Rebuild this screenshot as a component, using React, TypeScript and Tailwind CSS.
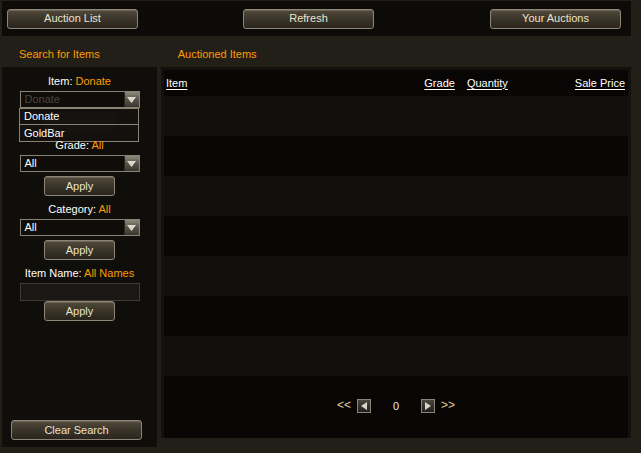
import React from 'react';

const font = { fontFamily: '"Liberation Sans", Arial, sans-serif' };

type BtnProps = { title: string, className?: string };

const GameButton = ({ title, className = '' }: BtnProps) => (
    <div className={`flex items-center justify-center h-[20px] rounded-[3px] border border-[#8c8578] bg-gradient-to-b from-[#524a3b] via-[#3a3429] to-[#2a251d] text-[11px] text-[#ebe3cc] shadow-[inset_0_1px_0_#6d6554] ${className}`}>
        {title}
    </div>
);

const SelectBox = ({ value, dim }: { value: string, dim?: boolean }) => (
    <div className="relative mx-auto flex h-[17px] w-[120px] items-center border border-[#8a8272] bg-[#0e0d0a]">
        <span className={`pl-[4px] text-[11px] leading-none ${dim ? 'text-[#4a463e]' : 'text-white'}`}>{value}</span>
        <div className="absolute right-0 top-0 flex h-[15px] w-[15px] items-center justify-center border-l border-[#2a2620] bg-gradient-to-b from-[#8f8a7e] via-[#5a554b] to-[#3a362f]">
            <svg width="9" height="6" viewBox="0 0 9 6"><path d="M0 0h9L4.5 6z" fill="#dcd8d0" /></svg>
        </div>
    </div>
);

const Label = ({ name, value }: { name: string, value: string }) => (
    <div className="text-center text-[11px] leading-[14px] text-white">
        {name}: <span className="text-[#ff9c00]">{value}</span>
    </div>
);

const rows = [0, 1, 2, 3, 4, 5, 6];

export default function App() {
    return (
        <div style={font} className="h-[453px] w-[641px] overflow-hidden bg-[#221e18]">
            <div className="ml-[2px] mt-[1px] flex h-[35px] w-[629px] items-center bg-[#0c0b08] pl-[5px]">
                <GameButton title="Auction List" className="w-[131px]" />
                <GameButton title="Refresh" className="ml-[105px] w-[131px]" />
                <GameButton title="Your Auctions" className="ml-[116px] w-[131px]" />
            </div>

            <div className="flex h-[31px] items-center text-[11px] text-[#ff9c00]">
                <span className="ml-[19px] mt-[5px]">Search for Items</span>
                <span className="ml-[78px] mt-[5px]">Auctioned Items</span>
            </div>

            <div className="flex">
                <div className="relative ml-[2px] flex h-[380px] w-[155px] flex-col bg-[#0f0e0b] pt-[7px]">
                    <Label name="Item" value="Donate" />
                    <div className="relative mt-[3px]">
                        <SelectBox value="Donate" dim />
                        <div className="absolute left-[17px] top-[17px] w-[120px]">
                            <div className="flex h-[17px] items-center border border-[#8a8272] bg-[#14120ecc] pl-[4px] text-[11px] text-white">Donate</div>
                            <div className="-mt-px flex h-[18px] items-center border border-[#8a8272] bg-[#14120ecc] pl-[4px] text-[11px] text-white">GoldBar</div>
                        </div>
                        <div className="mx-auto mt-[5px] h-[19px] w-[71px] rounded-[3px] border border-[#2e2a22] bg-[#1c1914]" />
                    </div>
                    <div className="relative mt-[6px]"><Label name="Grade" value="All" /></div>
                    <div className="mt-[3px]"><SelectBox value="All" /></div>
                    <GameButton title="Apply" className="mx-auto mt-[4px] w-[71px]" />
                    <div className="mt-[6px]"><Label name="Category" value="All" /></div>
                    <div className="mt-[3px]"><SelectBox value="All" /></div>
                    <GameButton title="Apply" className="mx-auto mt-[4px] w-[71px]" />
                    <div className="mt-[6px]"><Label name="Item Name" value="All Names" /></div>
                    <div className="mx-auto mt-[3px] h-[18px] w-[120px] border border-[#3e3a33] bg-[#1a1815]" />
                    <GameButton title="Apply" className="mx-auto w-[71px]" />
                    <GameButton title="Clear Search" className="ml-[9px] mt-auto mb-[7px] w-[131px]" />
                </div>

                <div className="ml-[4px] h-[371px] w-[470px] bg-[#13110d] pl-[3px] pr-[3px] pt-[3px]">
                    <div className="flex h-[26px] items-center bg-[#070605] pl-[2px] pr-[3px] text-[11px] text-white">
                        <span className="underline underline-offset-2">Item</span>
                        <span className="ml-auto underline underline-offset-2">Grade</span>
                        <span className="ml-[12px] underline underline-offset-2">Quantity</span>
                        <span className="ml-[67px] underline underline-offset-2">Sale Price</span>
                    </div>
                    {rows.map((i) => (
                        <div key={i} className={`h-[40px] ${i % 2 === 0 ? 'bg-[#11100d]' : 'bg-[#080706]'}`} />
                    ))}
                    <div className="flex h-[62px] items-center justify-center bg-[#080706] pb-[2px]">
                        <span className="mb-[3px] text-[12px] tracking-[0px] text-[#e6c98c]">&lt;&lt;</span>
                        <div className="ml-[6px] flex h-[14px] w-[14px] items-center justify-center border border-[#8a8578] bg-gradient-to-b from-[#4a463e] to-[#22201b]">
                            <svg width="6" height="8" viewBox="0 0 6 8"><path d="M6 0v8L0 4z" fill="#d8d4cc" /></svg>
                        </div>
                        <span className="mx-[22px] text-[11px] text-[#e8e8e8]">0</span>
                        <div className="flex h-[14px] w-[14px] items-center justify-center border border-[#8a8578] bg-gradient-to-b from-[#4a463e] to-[#22201b]">
                            <svg width="6" height="8" viewBox="0 0 6 8"><path d="M0 0v8L6 4z" fill="#d8d4cc" /></svg>
                        </div>
                        <span className="mb-[3px] ml-[6px] text-[12px] tracking-[0px] text-[#e6c98c]">&gt;&gt;</span>
                    </div>
                </div>
            </div>
        </div>
    );
}
